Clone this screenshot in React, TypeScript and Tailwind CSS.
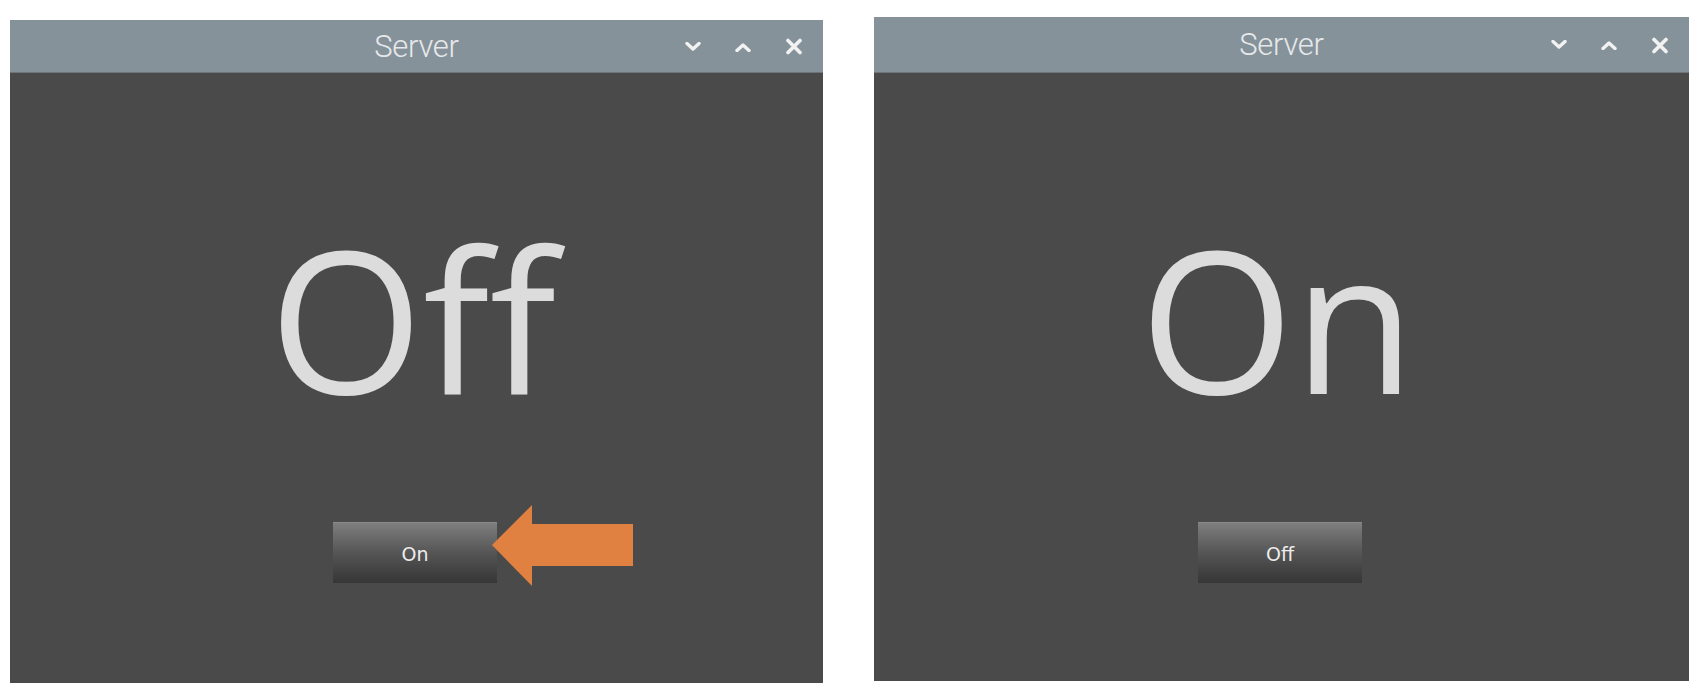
import React from "react";

type WindowProps = {
  title: string;
  state: string;
  action: string;
  barHeight: string;
  bodyHeight: string;
  width: string;
  children?: React.ReactNode;
};

function Chevron({ up }: { up?: boolean }) {
  return (
    <svg width="16" height="10" viewBox="0 0 16 10" className="block">
      <path
        d={up ? "M2 8.5 L8 3 L14 8.5" : "M2 1.5 L8 7 L14 1.5"}
        fill="none"
        stroke="#f2f2f2"
        strokeWidth="3.4"
        strokeLinecap="round"
        strokeLinejoin="round"
      />
    </svg>
  );
}

function CloseIcon() {
  return (
    <svg width="18" height="17" viewBox="0 0 18 17" className="block">
      <path
        d="M3 2.5 L15 14.5 M15 2.5 L3 14.5"
        fill="none"
        stroke="#f2f2f2"
        strokeWidth="3.6"
        strokeLinecap="round"
      />
    </svg>
  );
}

function ServerWindow({ title, state, action, barHeight, bodyHeight, width, children }: WindowProps) {
  return (
    <div className={`flex flex-col ${width}`}>
      {/* title bar */}
      <div className={`relative flex items-center justify-center bg-[#86929a] border-b border-[#6c757b] ${barHeight}`}>
        <span
          className="text-[31px] font-light leading-none text-[#e6e9eb] tracking-[-0.3px]"
          style={{ fontFamily: "Roboto, 'Liberation Sans', sans-serif" }}
        >
          {title}
        </span>
        <div className="absolute right-[20px] top-0 bottom-0 flex items-center gap-[34px] pt-[1px]">
          <Chevron />
          <Chevron up />
          <CloseIcon />
        </div>
      </div>

      {/* body */}
      <div className={`relative flex flex-col items-center bg-[#4a4a4a] ${bodyHeight}`}>
        <div
          className="mt-[144px] -ml-[8px] text-[198px] leading-[200px] h-[200px] text-[#dcdcdc]"
          style={{ fontFamily: "'Open Sans', 'Noto Sans', sans-serif" }}
        >
          {state}
        </div>
        <button
          type="button"
          className="mt-[105px] -ml-[3px] w-[164px] h-[61px] border-t border-[#8a8a8a] bg-gradient-to-b from-[#7e7e7e] via-[#555555] to-[#363636] text-[19px] text-[#ececec] pt-[2px]"
          style={{ fontFamily: "'DejaVu Sans', 'Noto Sans', sans-serif" }}
        >
          {action}
        </button>
        {children}
      </div>
    </div>
  );
}

export default function App() {
  return (
    <div className="w-[1700px] h-[696px] bg-white flex items-start">
      <div className="ml-[10px] mt-[20px]">
        <ServerWindow
          title="Server"
          state="Off"
          action="On"
          width="w-[813px]"
          barHeight="h-[53px]"
          bodyHeight="h-[610px]"
        >
          {/* annotation arrow pointing at the button */}
          <svg
            width="145"
            height="86"
            viewBox="0 0 145 86"
            className="absolute left-[480px] top-[430px]"
          >
            <polygon
              points="2,42 42,2 42,21 143,21 143,63 42,63 42,83"
              fill="#e08142"
            />
          </svg>
        </ServerWindow>
      </div>
      <div className="ml-[51px] mt-[17px]">
        <ServerWindow
          title="Server"
          state="On"
          action="Off"
          width="w-[815px]"
          barHeight="h-[56px]"
          bodyHeight="h-[608px]"
        />
      </div>
    </div>
  );
}
